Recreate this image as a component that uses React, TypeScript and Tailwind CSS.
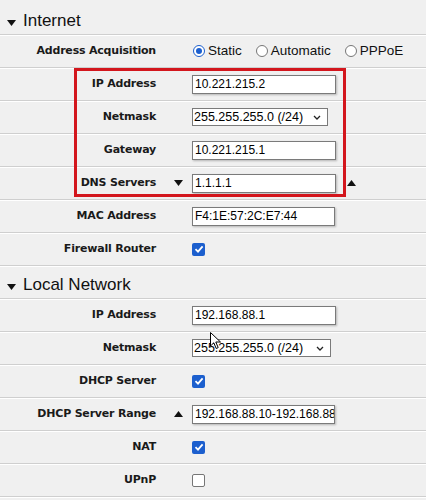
import type { ReactNode } from 'react';

const LABEL_FONT = { fontFamily: '"DejaVu Sans", Verdana, sans-serif' };
const VALUE_FONT = { fontFamily: '"Liberation Sans", Tahoma, Arial, sans-serif' };

function Caret({ up = false }: { up?: boolean }) {
  return (
    <svg width="9" height="6" viewBox="0 0 9 6" className="block">
      {up ? <path d="M4.5 0 L9 6 L0 6 Z" fill="#111" /> : <path d="M0 0 L9 0 L4.5 6 Z" fill="#111" />}
    </svg>
  );
}

function Heading({ title }: { title: string }) {
  return (
    <div className="flex items-end h-[33px] pb-[3px] pl-[7px] border-b border-[#cfcfcf] shadow-[0_1px_0_#ffffff]">
      <span className="mb-[5px] mr-[7px]">
        <Caret />
      </span>
      <span className="text-[17px] leading-[20px] text-[#111]" style={VALUE_FONT}>
        {title}
      </span>
    </div>
  );
}

function Row({ label, caret, children }: { label: string; caret?: 'up' | 'down'; children: ReactNode }) {
  return (
    <div className="flex items-center h-[33px] border-b border-[#cfcfcf] shadow-[0_1px_0_#ffffff]">
      <div
        className="w-[156px] text-right text-[11px] font-bold tracking-[-0.2px] text-[#1a1a1a]"
        style={LABEL_FONT}
      >
        {label}
      </div>
      <div className="w-[36px] flex justify-center pl-[8px]">
        {caret && <Caret up={caret === 'up'} />}
      </div>
      <div className="flex-1 flex items-center">{children}</div>
    </div>
  );
}

function TextBox({ value, width = 'w-[144px]' }: { value: string; width?: string }) {
  return (
    <div
      className={`${width} h-[19px] bg-white border border-[#7a7a7a] shadow-[1px_1px_2px_rgba(0,0,0,0.25)] pl-[2px] text-[12px] leading-[17px] text-black overflow-hidden whitespace-nowrap`}
      style={VALUE_FONT}
    >
      {value}
    </div>
  );
}

function Select({ value, width }: { value: string; width: string }) {
  return (
    <div
      className={`${width} h-[18px] bg-white border border-[#7a7a7a] flex items-center justify-between pl-[1px] pr-[6px] text-[12.5px] text-black`}
      style={VALUE_FONT}
    >
      <span>{value}</span>
      <svg width="8" height="5" viewBox="0 0 8 5">
        <path d="M1 1 L4 4 L7 1" fill="none" stroke="#222" strokeWidth="1.3" />
      </svg>
    </div>
  );
}

function Check({ on }: { on: boolean }) {
  if (!on) return <div className="w-[13px] h-[13px] bg-white border border-[#767676] rounded-[2px]" />;
  return (
    <div className="w-[13px] h-[13px] bg-[#1c5fce] rounded-[2px] flex items-center justify-center">
      <svg width="10" height="10" viewBox="0 0 10 10">
        <path d="M1.5 5.2 L4 7.6 L8.6 2.4" fill="none" stroke="#fff" strokeWidth="1.8" />
      </svg>
    </div>
  );
}

function Radio({ on, label }: { on: boolean; label: string }) {
  return (
    <div className="flex items-center gap-[3px]">
      <div
        className={`w-[12px] h-[12px] rounded-full border flex items-center justify-center bg-white ${
          on ? 'border-[#1c5fce]' : 'border-[#767676]'
        }`}
      >
        {on && <div className="w-[6px] h-[6px] rounded-full bg-[#1c5fce]" />}
      </div>
      <span className="text-[13.5px] text-[#111]" style={VALUE_FONT}>
        {label}
      </span>
    </div>
  );
}

export default function App() {
  return (
    <div className="relative w-[426px] h-[500px] overflow-hidden bg-[#f0f0f0] pt-[2px]">
      <Heading title="Internet" />
      <Row label="Address Acquisition">
        <div className="flex items-center gap-[14px] pl-[1px]">
          <Radio on label="Static" />
          <Radio on={false} label="Automatic" />
          <Radio on={false} label="PPPoE" />
        </div>
      </Row>
      <Row label="IP Address">
        <TextBox value="10.221.215.2" />
      </Row>
      <Row label="Netmask">
        <Select value="255.255.255.0 (/24)" width="w-[136px]" />
      </Row>
      <Row label="Gateway">
        <TextBox value="10.221.215.1" />
      </Row>
      <Row label="DNS Servers" caret="down">
        <TextBox value="1.1.1.1" />
        <span className="ml-[11px]">
          <Caret up />
        </span>
      </Row>
      <Row label="MAC Address">
        <TextBox value="F4:1E:57:2C:E7:44" width="w-[143px]" />
      </Row>
      <Row label="Firewall Router">
        <Check on />
      </Row>
      <Heading title="Local Network" />
      <Row label="IP Address">
        <TextBox value="192.168.88.1" />
      </Row>
      <Row label="Netmask">
        <Select value="255.255.255.0 (/24)" width="w-[139px]" />
      </Row>
      <Row label="DHCP Server">
        <Check on />
      </Row>
      <Row label="DHCP Server Range" caret="up">
        <TextBox value="192.168.88.10-192.168.88" width="w-[143px]" />
      </Row>
      <Row label="NAT">
        <Check on />
      </Row>
      <Row label="UPnP">
        <Check on={false} />
      </Row>

      {/* annotation box */}
      <div className="absolute left-[74px] top-[68px] w-[272px] h-[129px] border-[3px] border-[#d3161d] pointer-events-none" />

      {/* mouse pointer */}
      <svg className="absolute left-[210px] top-[332px]" width="12" height="18" viewBox="0 0 12 18">
        <path d="M0.5 0.5 L0.5 14 L3.8 10.8 L6.2 16.5 L8.2 15.6 L5.8 10 L10.5 10 Z" fill="#fff" stroke="#000" strokeWidth="1" />
      </svg>
    </div>
  );
}
